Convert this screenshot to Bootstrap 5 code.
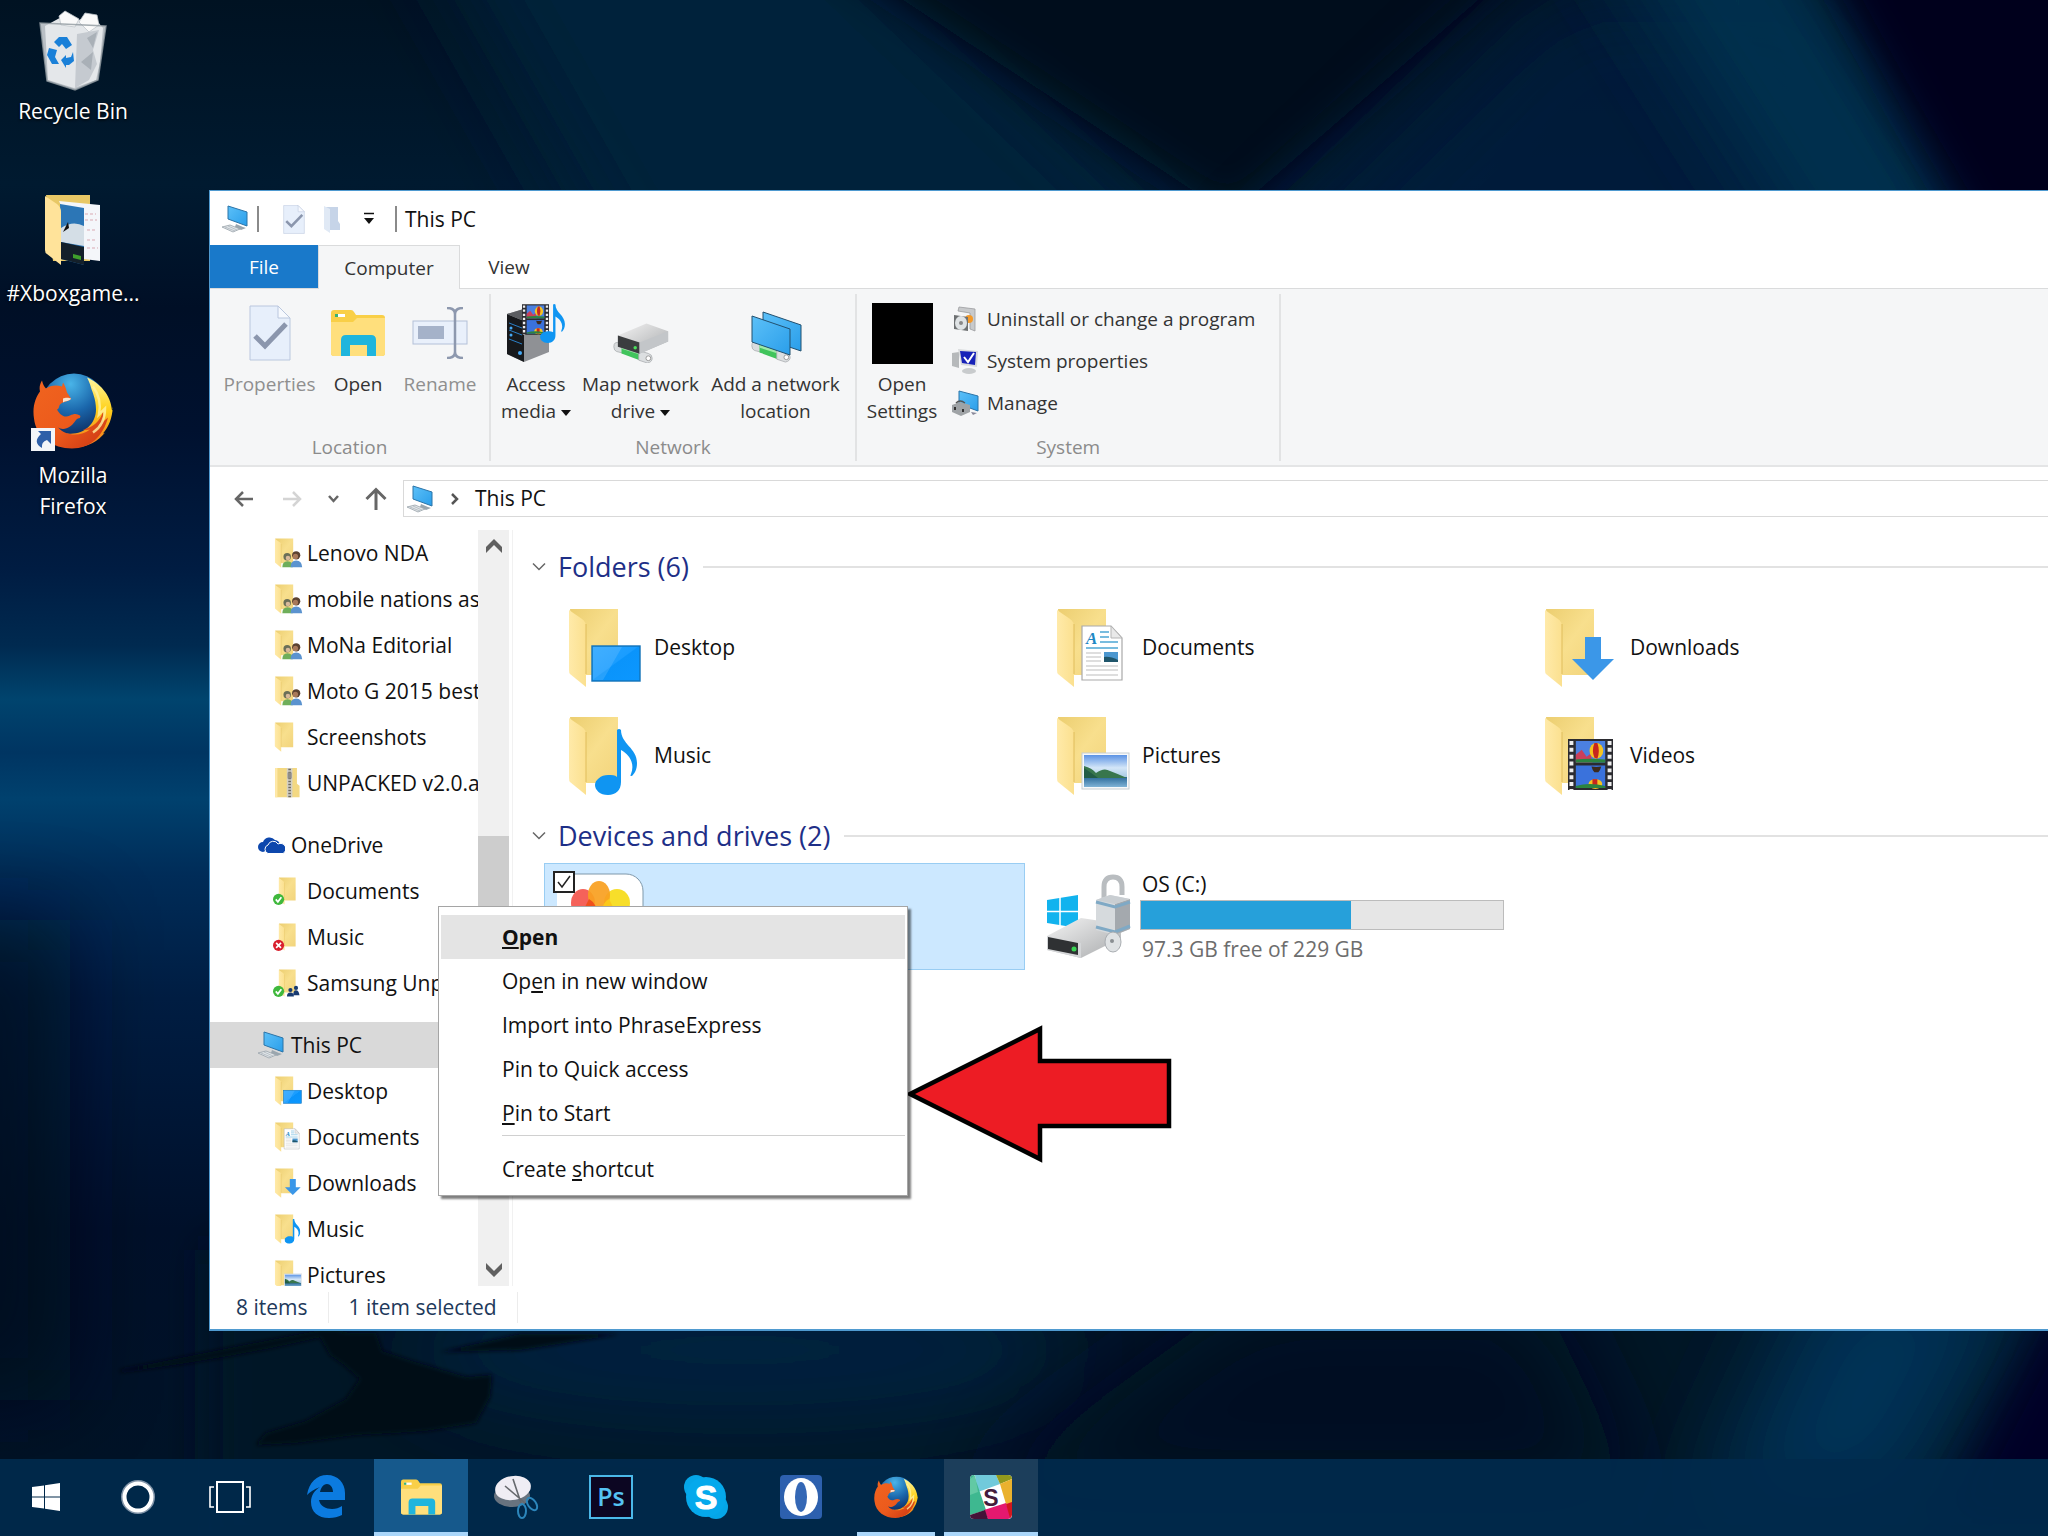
<!DOCTYPE html>
<html lang="en">
<head>
<meta charset="utf-8">
<meta name="viewport" content="width=device-width, initial-scale=1">
<title>This PC</title>
<link href="https://cdn.jsdelivr.net/npm/bootstrap@5.3.0/dist/css/bootstrap.min.css" rel="stylesheet">
<style>
:root{--ui:"Open Sans","Noto Sans",sans-serif;}
html,body{height:100%;}
body{font-family:var(--ui);font-size:21px;line-height:31px;color:#111;background:#00122a;overflow:hidden;}
svg{display:block;flex:none;}
a{color:inherit;text-decoration:none;}
.wallpaper{position:absolute;inset:0;width:100%;height:100%;z-index:-1;}
.fill{min-height:0;flex:1 1 0;}
/* desktop shortcuts */
.shortcuts{width:209px;}
.shortcut{width:146px;height:182px;padding-top:8px;color:#fff;text-align:center;text-shadow:0 1px 3px #000;}
.shortcut svg{margin:0 auto 4px;}
/* explorer window */
.explorer{margin:190px 0 128px;background:#fff;border:solid #4f9ad0;border-width:1px 0 2px 1px;min-width:0;}
.titlebar{height:54px;padding:2px 0 0 11px;flex:none;}
.rule{width:2px;height:26px;background:#8a8a8a;}
.tabs{height:44px;border-bottom:1px solid #dadbdc;flex:none;}
.tabs .btn{border-radius:0;border:0;font-size:19px;line-height:28px;padding:0;height:43px;color:#333;}
.tabs .tab-file{width:108px;background:#1979ca;color:#fff;}
.tabs .tab-on{width:142px;height:44px;background:#f5f6f7;border:1px solid #dadbdc;border-bottom:0;}
.tabs .tab-view{width:98px;}
.ribbon{height:178px;background:#f5f6f7;border-bottom:2px solid #e4e5e6;font-size:19px;line-height:27px;padding:5px 0 4px;flex:none;}
.ribbon-group{border-right:2px solid #e2e3e4;}
.ribbon .btn{font-size:19px;line-height:27px;padding:0;border:0;border-radius:0;color:#333;}
.ribbon .btn:disabled{color:#8f8f8f;opacity:1;}
.tool{display:flex;flex-direction:column;align-items:center;}
.tool .pic{height:62px;margin:8px 0 7px;display:flex;align-items:center;}
.stacked{gap:15px;}
.group-name{color:#8b8b8b;margin-top:auto;text-align:center;}
.wd-a{width:95px}.wd-b{width:82px}.wd-c{width:127px}.wd-d{width:143px}.wd-e{width:74px}
.caret{display:inline-block;border:5px solid transparent;border-top:6px solid #111;border-bottom:0;vertical-align:middle;margin-left:5px;}
.addressbar{height:63px;padding:13px 0 13px 24px;flex:none;}
.addressbar .btn{border:0;padding:0;}
.address{height:37px;border:1px solid #d9d9d9;border-right:0;}
/* navigation tree */
.tree{width:268px;overflow:hidden;flex:none;}
.tree a{display:flex;align-items:center;height:46px;white-space:nowrap;}
.tree .lv1{padding-left:47px;gap:6px;margin-top:16px;}
.tree .lv2{padding-left:63px;gap:3px;}
.tree .lv2 svg{width:31px;height:30px;}
.tree .chosen{background:#d9d9d9;}
.scroller{width:31px;background:#f0f0f0;}
.thumb{height:310px;background:#cdcdcd;margin-top:282px;}
.filepane{border-left:1px solid #f1f1f1;margin-left:3px;padding:10px 0 0 18px;min-width:0;}
.section-head{height:54px;color:#1e2f87;gap:11px;}
.section-head hr{margin:0 0 0 3px;border:0;height:2px;background:#e2e2e2;opacity:1;}
.section-head h2{font-size:27px;font-weight:400;margin:0;line-height:36px;}
.tiles{gap:1px 7px;padding-left:13px;}
.tile{width:481px;height:107px;padding-left:12px;gap:10px;border:1px solid transparent;}
.tile .art{width:87px;}
.tile-on{background:#cce8ff;border-color:#99cdf3;position:relative;}
.tile-on .form-check-input{position:absolute;left:8px;top:7px;width:22px;height:22px;margin:0;border:2px solid #222;border-radius:0;background-color:#fff;background-image:none;}
.tile-on .tickmark{position:absolute;left:11px;top:10px;}
.space-bar{width:364px;height:30px;border-radius:0;background:#e6e6e6;border:1px solid #bcbcbc;margin-left:-2px;}
.space-bar .progress-bar{background:#26a0da;}
.free-note{color:#6d6d6d;}
.statusbar{height:43px;color:#1e395b;padding-left:26px;flex:none;}
.statusbar span{border-right:1px solid #ececec;padding-right:20px;margin-right:20px;}
/* context menu */
.ctx{position:absolute;left:438px;top:906px;width:470px;border:1px solid #a5a5a5;border-radius:0;padding:8px 2px 4px;background:#fff;box-shadow:3px 3px 2px rgba(0,0,0,.5);font-size:21px;--bs-dropdown-divider-margin-y:0;display:block;min-width:0;color:#111;}
.ctx .dropdown-item{height:44px;padding:0 0 0 61px;line-height:44px;color:#111;}
.ctx .first{background:#e4e4e4;font-weight:700;}
.ctx hr{margin:0 0 11px 61px;border-color:#d0d0d0;}
.pointer{position:absolute;left:906px;top:1024px;}
/* taskbar */
.taskbar{height:77px;background:rgba(0,42,76,.93);}
.taskbar .btn{border:0;border-radius:0;padding:0;height:77px;display:flex;align-items:center;justify-content:center;border-bottom:4px solid transparent;padding-top:2px;}
.sys .btn{width:92px;}
.apps{gap:1px;padding-left:3px;}
.apps .btn{width:94px;}
.apps .running{border-bottom-color:#a9d6fa;}
.apps .active-app{background:#16598c;}
.apps .hover-app{background:#1c3e5b;}
.apps .narrow{width:78px;margin:0 8px;}
</style>
<script src="https://cdn.jsdelivr.net/npm/bootstrap@5.3.0/dist/js/bootstrap.bundle.min.js"></script>
</head>
<body class="d-flex flex-column">

<svg width="0" height="0" class="position-absolute" aria-hidden="true">
<defs>
<linearGradient id="gBack" x1="0" y1="0" x2="1" y2="1"><stop offset="0" stop-color="#ecce70"/><stop offset=".5" stop-color="#f8df8d"/><stop offset="1" stop-color="#f2d47c"/></linearGradient>
<linearGradient id="gFlap" x1="0" y1="0" x2="1" y2="0"><stop offset="0" stop-color="#ffeaa9"/><stop offset="1" stop-color="#fbe08f"/></linearGradient>
<linearGradient id="gBlue" x1="0" y1="0" x2="1" y2="1"><stop offset="0" stop-color="#27a4ff"/><stop offset=".48" stop-color="#1a9dff"/><stop offset=".5" stop-color="#0a94fb"/><stop offset="1" stop-color="#0c97ff"/></linearGradient>
<linearGradient id="gScreen" x1="0" y1="0" x2="1" y2="1"><stop offset="0" stop-color="#5cc0f8"/><stop offset="1" stop-color="#2a9eea"/></linearGradient>
<linearGradient id="gGrey" x1="0" y1="0" x2="1" y2="1"><stop offset="0" stop-color="#f4f4f4"/><stop offset="1" stop-color="#a9abad"/></linearGradient>
<linearGradient id="gSky" x1="0" y1="0" x2="0" y2="1"><stop offset="0" stop-color="#5b93e4"/><stop offset=".4" stop-color="#d4e6f8"/><stop offset=".68" stop-color="#a9cbe3"/><stop offset=".7" stop-color="#2f6d9c"/><stop offset="1" stop-color="#7fb3d6"/></linearGradient>
<linearGradient id="gFox" x1="0" y1="0" x2="1" y2="1"><stop offset="0" stop-color="#f0641f"/><stop offset=".55" stop-color="#ec5a1c"/><stop offset="1" stop-color="#c93412"/></linearGradient>
<linearGradient id="gTail" x1="0" y1="0" x2="0" y2="1"><stop offset="0" stop-color="#fff6a0"/><stop offset=".45" stop-color="#ffd21c"/><stop offset="1" stop-color="#f1701c"/></linearGradient>
<radialGradient id="gGlobe" cx=".45" cy=".15" r=".8"><stop offset="0" stop-color="#49b4e8"/><stop offset=".5" stop-color="#1a66ab"/><stop offset="1" stop-color="#0b2457"/></radialGradient>

<symbol id="folder" viewBox="0 0 73 80"><path d="M1 1h48v66H8z" fill="url(#gBack)"/><path d="M0 2l13 9q4 3 4 7v61L1 66q-1-1-1-4z" fill="url(#gFlap)"/><path d="M17 16v50" stroke="#e0bd5c" stroke-width="1"/></symbol>
<symbol id="f-desktop" viewBox="0 0 73 80"><use href="#folder" width="73" height="80"/><rect x="23" y="38" width="48" height="35" fill="url(#gBlue)" stroke="#1272b8" stroke-width="1.4"/><path d="M24 39h29L34 72H24z" fill="#fff" opacity=".12"/></symbol>
<symbol id="f-docs" viewBox="0 0 73 80"><use href="#folder" width="73" height="80"/><path d="M25 18h29l11 12v42H25z" fill="#fff" stroke="#a9a9a9" stroke-width="1.2"/><path d="M54 18v12h11z" fill="#e9e9e9" stroke="#b5b5b5"/><text x="29" y="36" font-family="Liberation Serif,serif" font-style="italic" font-weight="700" font-size="17" fill="#1e88c4">A</text><path d="M43 24h9M43 29h9M43 34h18M29 40h32" stroke="#4da6d4" stroke-width="1.4"/><path d="M29 45h15M29 49h15M29 53h15M29 58h32M29 62h32M29 67h32" stroke="#bdbdbd"/><path d="M47 44h14v10H47z" fill="#4c97cf"/><path d="M47 49q6-1 14 3v2H47z" fill="#20566b"/></symbol>
<symbol id="f-down" viewBox="0 0 73 80"><use href="#folder" width="73" height="80"/><path d="M40 29h16v22h13L48 72 27 51h13z" fill="#3b97e8"/></symbol>
<symbol id="note" viewBox="0 0 42 66"><path d="M22 1q2-2 4 0c0 14 16 18 16 33 0 6-2 10-5 13-1 0-2 0-1-2 4-10-1-19-10-24v32c0 8-5 13-13 13S0 61 0 56s6-10 13-10c4 0 7 0 9 2z" fill="#0f95f2"/></symbol>
<symbol id="f-music" viewBox="0 0 73 80"><use href="#folder" width="73" height="80"/><use href="#note" x="26" y="13" width="42" height="66"/></symbol>
<symbol id="f-pics" viewBox="0 0 73 80"><use href="#folder" width="73" height="80"/><rect x="25" y="37" width="47" height="36" fill="#f7f9fa" stroke="#c6cdd2"/><rect x="27" y="39" width="43" height="32" fill="url(#gSky)"/><path d="M27 50q8 2 12 7 8-6 14-2 8 3 17 7H27z" fill="#38764d"/><path d="M27 52q6 4 14 10H27z" fill="#235c45"/></symbol>
<symbol id="film" viewBox="0 0 46 52"><path d="M0 0h46v52H0z" fill="#2b2b30"/><path d="M3.500 2v50M42.500 2v50" stroke="#eee" stroke-width="4" stroke-dasharray="4 3"/><path d="M8 2h30v22H8z" fill="#4b80e0"/><path d="M8 27h30v23H8z" fill="#3a72dc"/><path d="M8 16l6-5 5 7 4-3 2 9H8z" fill="#cb3f5a"/><path d="M8 21q14-2 30 0v3H8z" fill="#2c8440"/><ellipse cx="29" cy="12" rx="7" ry="8" fill="#f5c321"/><path d="M27 4q-3 8 0 15l3 1q3-8 0-16z" fill="#c7261e"/><path d="M24 28q5 1 10 0-1 4-3 6h-4q-2-2-3-6z" fill="#3c2a1d"/><ellipse cx="28" cy="46" rx="7" ry="5" fill="#f5c321"/><path d="M25 41h5v9h-5z" fill="#c7261e"/><path d="M8 48q14-4 30 0v2H8z" fill="#2c8440"/></symbol>
<symbol id="f-video" viewBox="0 0 73 80"><use href="#folder" width="73" height="80"/><use href="#film" x="23" y="23" width="45" height="51"/></symbol>
<symbol id="f-people" viewBox="0 0 73 80"><use href="#folder" width="73" height="80"/><path d="M20 78q0-16 14-16t14 16z" fill="#6fae5a"/><circle cx="33" cy="50" r="10" fill="#6b6f58"/><circle cx="35" cy="53" r="6" fill="#d9b99a"/><path d="M42 78q0-18 15-18t16 18z" fill="#5b93cf"/><circle cx="57" cy="46" r="11" fill="#5a4130"/><circle cx="55" cy="49" r="7" fill="#a8795a"/></symbol>
<symbol id="f-zip" viewBox="0 0 73 80"><path d="M1 0h58v42l7 5v31H1z" fill="#f3d882"/><path d="M1 0h6v78H1z" fill="#ffe9a8"/><path d="M32 0h15v78H32z" fill="#d4d0c4"/><path d="M39.500 2v76" stroke="#6e6a5f" stroke-width="7" stroke-dasharray="4 4"/><path d="M34 12h11v16H34z" fill="#8f8d88"/></symbol>
<symbol id="f-ok" viewBox="-16 0 89 80"><use href="#folder" width="73" height="80"/><circle cx="0" cy="64" r="16" fill="#3fb83c"/><path d="M-8 64l6 7 10-13" fill="none" stroke="#fff" stroke-width="5"/></symbol>
<symbol id="f-bad" viewBox="-16 0 89 80"><use href="#folder" width="73" height="80"/><circle cx="0" cy="64" r="16" fill="#d9202e"/><path d="M-7 57L7 71M7 57L-7 71" stroke="#fff" stroke-width="5"/></symbol>
<symbol id="f-okshare" viewBox="-16 0 89 80"><use href="#folder" width="73" height="80"/><circle cx="0" cy="64" r="16" fill="#3fb83c"/><path d="M-8 64l6 7 10-13" fill="none" stroke="#fff" stroke-width="5"/><g fill="#173a70"><circle cx="34" cy="60" r="6"/><path d="M24 79q0-12 10-12t10 12z"/><circle cx="50" cy="54" r="6"/><path d="M42 75q0-14 8-14t10 14z"/></g></symbol>
<symbol id="pc" viewBox="0 0 28 28"><path d="M7 1l19 6v14L7 14z" fill="url(#gScreen)" stroke="#2b74a8" stroke-width="1"/><path d="M15 19l7 3 3 1-5 2-6-3z" fill="#9aa6ae"/><path d="M1 22l8-2 10 4-7 3z" fill="#e3e7ea" stroke="#98a2a9" stroke-width=".8"/><path d="M4 22l10 4M7 21l9 4" stroke="#a5afb6" stroke-width=".7"/></symbol>
<symbol id="checkdoc" viewBox="0 0 42 56"><path d="M1 1h28l12 12v42H1z" fill="#e7effb" stroke="#bac7de"/><path d="M29 1v12h12z" fill="#f6f9fe" stroke="#bac7de"/><path d="M6 31l10 10 21-22" fill="none" stroke="#8b96ad" stroke-width="5"/></symbol>
<symbol id="explorerico" viewBox="0 0 54 46"><path d="M0 3q0-3 3-3h17q2 0 3 2l2 3h26q3 0 3 3v35q0 3-3 3H3q-3 0-3-3z" fill="#f9cf47"/><path d="M0 12h22l4-4h28v35q0 3-3 3H3q-3 0-3-3z" fill="#ffdf7c"/><path d="M4 4h10v3H4z" fill="#fff"/><path d="M4 4h3v3H4z" fill="#3bb273"/><path d="M10 46V30q0-5 5-5h25q5 0 5 5v16h-9V35H19v11z" fill="#1fb5dd"/></symbol>
<symbol id="firefox" viewBox="0 0 80 76"><ellipse cx="41" cy="36" rx="34" ry="35" fill="url(#gGlobe)"/><path d="M54 5C66 10 78 22 79 38c2-2 1-4 1-4-1 12-4 20-10 27 1 0 2-1 3-2-8 10-18 16-33 16l-6-14c16 2 29-9 29-24 0-11-4-18-5-22-1-4-3-8-4-10z" fill="url(#gTail)"/><path d="M9 8c1 4 2 6 4 8 4-3 10-4 16-2l1-4c2 3 3 6 4 10l4 6c-1 3-7 2-11 6-1 1-1 5-3 5 3 5 7 9 13 6 4-2 7-2 10 0 1 1 0 3-2 3-3 1-4 6-8 8-4 3-9 3-12 1 7 8 22 10 32 2-4 1-7 0-7 0 10-2 17-8 20-18 1 4 0 8-1 11l6-5c-5 19-18 31-36 31C20 76 3 65 1 46-1 34 3 24 7 19c-1-4 0-8 2-11z" fill="url(#gFox)"/><path d="M30 26c2-1 6-1 8 0-1 3-6 2-8 4z" fill="#f7e3cf"/><path d="M60 14c6 8 8 18 6 28l6-6c0 12-6 20-12 24" fill="none" stroke="#fff2a2" stroke-width="2.500" opacity=".8"/></symbol>
<symbol id="drive" viewBox="0 0 60 36"><path d="M1 14L34 0l25 9v12L26 35 1 27z" fill="url(#gGrey)"/><path d="M1 14l25 8v13L1 27z" fill="#3b3d3f"/><path d="M26 22l33-13v12L26 35z" fill="#c3c6c9"/><circle cx="21" cy="28" r="2" fill="#4be05c"/></symbol>
<symbol id="cable" viewBox="0 0 42 24"><path d="M1 6q0-6 6-4l5 2v9L4 11q-3-1-3-5z" fill="#d9dcde" stroke="#a7abae" stroke-width=".8"/><path d="M9 3l19 6v11L9 13z" fill="#41c45c"/><path d="M9 5l19 6v3L9 8z" fill="#9eeaa8"/><path d="M27 10l10 3q4 1 4 5t-5 5l-9-3z" fill="#dcdfe1" stroke="#a7abae" stroke-width=".8"/><circle cx="37" cy="18" r="2.500" fill="#fff" stroke="#999"/></symbol>
</defs>
</svg>

<svg class="wallpaper" viewBox="0 0 2048 1536" preserveAspectRatio="none" aria-hidden="true">
<defs>
<filter id="b20" filterUnits="userSpaceOnUse" x="-400" y="-400" width="2900" height="2400"><feGaussianBlur stdDeviation="20"/></filter>
<filter id="b40" filterUnits="userSpaceOnUse" x="-400" y="-400" width="2900" height="2400"><feGaussianBlur stdDeviation="45"/></filter>
<filter id="b1" filterUnits="userSpaceOnUse" x="0" y="1280" width="700" height="220"><feGaussianBlur stdDeviation="2"/></filter>
<linearGradient id="wBase" x1="0" y1="0" x2="0" y2="1"><stop offset="0" stop-color="#001222"/><stop offset=".12" stop-color="#001a30"/><stop offset=".2" stop-color="#000f26"/><stop offset=".28" stop-color="#00112f"/><stop offset=".37" stop-color="#001c42"/><stop offset=".42" stop-color="#002a50"/><stop offset=".455" stop-color="#00446e"/><stop offset=".49" stop-color="#003562"/><stop offset=".52" stop-color="#00416e"/><stop offset=".57" stop-color="#002c58"/><stop offset=".65" stop-color="#001d42"/><stop offset=".8" stop-color="#00102a"/><stop offset="1" stop-color="#001426"/></linearGradient>
</defs>
<rect width="2048" height="1536" fill="url(#wBase)"/>
<rect x="-120" y="920" width="190" height="480" fill="#000c1c" opacity=".7" filter="url(#b40)"/>
<path d="M380-160H760L1240 300H640z" fill="#00223a" filter="url(#b40)"/>
<path d="M690-140H1640L1230 215z" fill="#000a1a" filter="url(#b20)"/>
<path d="M1230 300L1560-20H1820L2060 300z" fill="#001b3e" opacity=".8" filter="url(#b40)"/>
<path d="M1560-140H1740L2010 300H1840z" fill="#00304f" filter="url(#b40)"/>
<path d="M1740-200H2300V380H2060Q1900 120 1740-200z" fill="#00001f" filter="url(#b20)"/>
<rect x="209" y="1250" width="1900" height="300" fill="#001428" filter="url(#b20)"/>
<ellipse cx="740" cy="1350" rx="330" ry="70" fill="#002440" filter="url(#b40)"/>
<path d="M960 1500L1250 1290H1540L1640 1500z" fill="#000920" filter="url(#b40)"/>
<path d="M1700 1520L1820 1260H2040L1900 1520z" fill="#003156" filter="url(#b40)"/>
<path d="M2200 1290L2050 1310 1940 1520H2200z" fill="#000025" filter="url(#b20)"/>
<g fill="#000a18" filter="url(#b1)"><path d="M318 1333h58l6 18 30 10 54 16 26-2-2 22-14 26-50 8-30 2-40 2-60 8-40 2 10-12 40-12 40-22 14-20-16-14-14-10z"/><path d="M120 1370l200-40h30q-120 30-230 42zM440 1352l80-18h100q-60 10-100 16z"/></g>
</svg>

<main class="d-flex fill">
  <nav class="shortcuts flex-shrink-0" aria-label="Desktop">
    <a href="#" class="shortcut d-block">
      <svg width="72" height="84" viewBox="0 0 72 84"><path d="M3 15l66 3-8 54-23 10-28-9z" fill="#b9bfc5"/><path d="M8 18L30 6l12 6 12-6 12 14-3 34-4 18-22 8-26-8z" fill="#e4e7ea"/><path d="M22 8l6-5 14 8-4 8-14-2zM42 14l6-9 12 2 2 10-10 7z" fill="#fafafa" stroke="#bfc5ca" stroke-width=".8"/><path d="M40 26l22-4-6 20 4 14-8 16-14 8z" fill="#c5cad0"/><path d="M50 30l10-6-4 16zM44 54l12-10-2 18z" fill="#a9b0b7"/><path d="M3 15l66 3-8 54-23 10-28-9z" fill="none" stroke="#8f989f" stroke-width="1.500" opacity=".8"/><g fill="#1a80d8"><path d="M17 34l5-5h8l5 8-6 4-4-5-3 3z"/><path d="M12 40l8 2-2 7 4 7h-7l-5-9z"/><path d="M24 52l5-5v3l5-1 2-5 1 9-5 4-3 0v3z"/></g></svg>
      Recycle Bin</a>
    <a href="#" class="shortcut d-block">
      <svg width="56" height="84" viewBox="0 -3 56 84"><path d="M1 2h44v66H8z" fill="#e8c866"/><path d="M14 8l41 4v56l-16-2z" fill="#f4f6fa"/><path d="M40 21h11M40 27h12M42 37h10M42 47h10M42 55h11" stroke="#d9a9b2" stroke-dasharray="3 2"/><path d="M15 11l24 4v57l-23-6z" fill="#2c76b6"/><path d="M16 35q12-8 23-2v20l-23-4z" fill="#d4dee6"/><path d="M16 49l23 5v18l-23-6z" fill="#14202a"/><path d="M18 39l5-10 1 6z" fill="#111"/><path d="M28 61l8 2v4l-8-2z" fill="#3fa02c"/><path d="M0 3l12 8q4 3 4 8v53L2 61q-2-1-2-4z" fill="#ffe39a"/></svg>
      #Xboxgame...</a>
    <a href="#" class="shortcut d-block">
      <svg width="84" height="84" viewBox="0 0 84 84"><use href="#firefox" x="2" y="0" width="80" height="77"/><rect x="0" y="56" width="24" height="23" fill="#f3f5f8"/><path d="M7 59h13v13l-4-4q-6 2-5 8-10-6-1-14z" fill="#2e5fa8"/></svg>
      Mozilla<br>Firefox</a>
  </nav>

  <section class="explorer d-flex flex-column flex-grow-1">
    <header class="titlebar d-flex align-items-center">
      <svg width="28" height="28"><use href="#pc"/></svg>
      <span class="rule ms-2"></span>
      <svg class="ms-4" width="22" height="29"><use href="#checkdoc"/></svg>
      <svg class="ms-3" width="22" height="29" viewBox="0 0 22 29"><path d="M4 2h13v14l2 3v6H6z" fill="#c6d4e8"/><path d="M3 1l6 3v24l-6-4z" fill="#e0e9f5"/></svg>
      <svg class="ms-3" width="20" height="14" viewBox="0 0 20 14"><path d="M5 1.500h10" stroke="#111" stroke-width="1.500"/><path d="M5 6h10l-5 6z" fill="#111"/></svg>
      <span class="rule ms-3"></span>
      <span class="ms-2">This PC</span>
    </header>
    <div class="tabs d-flex">
      <button class="btn tab-file">File</button><button class="btn tab-on">Computer</button><button class="btn tab-view">View</button>
    </div>

    <div class="ribbon d-flex">
      <div class="ribbon-group d-flex flex-column">
        <div class="d-flex align-items-start ps-2 pe-2 ms-1">
          <button class="btn tool wd-a" disabled><span class="pic"><svg width="42" height="56"><use href="#checkdoc"/></svg></span>Properties</button>
          <button class="btn tool wd-b"><span class="pic"><svg width="54" height="46"><use href="#explorerico"/></svg></span>Open</button>
          <button class="btn tool wd-b" disabled><span class="pic"><svg width="56" height="52" viewBox="0 0 56 52"><rect x="1" y="14" width="54" height="23" fill="#e9f0fb" stroke="#b3c0d8"/><rect x="6" y="19" width="26" height="13" fill="#a5b2c9"/><path d="M35 1q8 0 8 6v38q0 6-8 6M51 1q-8 0-8 6v38q0 6 8 6" fill="none" stroke="#8d98ae" stroke-width="2.500"/></svg></span>Rename</button>
        </div>
        <div class="group-name">Location</div>
      </div>
      <div class="ribbon-group d-flex flex-column">
        <div class="d-flex align-items-start ps-1 pe-2">
          <button class="btn tool wd-b"><span class="pic"><svg width="60" height="60" viewBox="0 0 60 60"><path d="M1 11l20-6 22 8v36L18 59 1 51z" fill="#8f9195"/><path d="M1 11l17 7v41L1 51z" fill="#17191c"/><path d="M1 11l20-6 22 8-25 5z" fill="#5b5d61"/><path d="M3 20l13 5M3 27l13 5M3 36l13 5" stroke="#2b7fc6" stroke-width="1"/><circle cx="5" cy="25" r="1.500" fill="#45a9f5"/><circle cx="5" cy="32" r="1.500" fill="#45a9f5"/><circle cx="14" cy="50" r="2" fill="#45a9f5"/><use href="#film" x="16" y="1" width="27" height="31"/><use href="#note" x="34" y="1" width="25" height="39"/></svg></span><span>Access<br>media<i class="caret"></i></span></button>
          <button class="btn tool wd-c"><span class="pic"><svg width="60" height="60" viewBox="0 0 60 60"><use href="#cable" x="1" y="38" width="42" height="23"/><use href="#drive" x="6" y="20" width="52" height="32"/></svg></span><span>Map network<br>drive<i class="caret"></i></span></button>
          <button class="btn tool wd-d"><span class="pic"><svg width="54" height="60" viewBox="0 0 54 60"><use href="#cable" x="1" y="37" width="42" height="23"/><path d="M14 9l38 13v26L14 35z" fill="url(#gScreen)" stroke="#23506f"/><path d="M3 13l38 13v26L3 39z" fill="url(#gScreen)" stroke="#23506f"/></svg></span><span>Add a network<br>location</span></button>
        </div>
        <div class="group-name">Network</div>
      </div>
      <div class="ribbon-group d-flex flex-column">
        <div class="d-flex align-items-start ps-2 pe-4">
          <button class="btn tool wd-e"><span class="pic"><svg width="61" height="61"><rect width="61" height="61"/></svg></span><span>Open<br>Settings</span></button>
          <div class="stacked d-flex flex-column ps-2 ms-1 pt-2 mt-1">
            <button class="btn d-flex align-items-center gap-2"><svg width="28" height="27" viewBox="0 0 28 27"><path d="M8 1l16 2v22l-5-2V7L7 5z" fill="#c8cacc" stroke="#9a9c9e" stroke-width=".8"/><circle cx="18" cy="13" r="4" fill="#f39a2b"/><path d="M3 9l14 2v14L3 23z" fill="#6d7072"/><ellipse cx="10" cy="17" rx="6" ry="7" fill="#dfe3e5"/><circle cx="10" cy="17" r="2" fill="#888"/></svg>Uninstall or change a program</button>
            <button class="btn d-flex align-items-center gap-2"><svg width="28" height="27" viewBox="0 0 28 27"><path d="M1 5l7-1v16l-7-2z" fill="#b6b9bb"/><path d="M7 1l20 2-1 16-16-2z" fill="#d8dadc"/><path d="M9 3l16 1-1 13-13-2z" fill="#1722b8"/><path d="M13 9l4 5 6-9" fill="none" stroke="#fff" stroke-width="2"/><ellipse cx="18" cy="23" rx="7" ry="3" fill="#c8cbcd"/></svg>System properties</button>
            <button class="btn d-flex align-items-center gap-2"><svg width="28" height="27" viewBox="0 0 28 27"><path d="M8 1l19 5v15L8 14z" fill="url(#gScreen)" stroke="#2b74a8"/><path d="M1 15l8-3 10 3v7l-9 4-9-4z" fill="#9fa3a6"/><path d="M5 13q4-4 9 0" fill="none" stroke="#555" stroke-width="1.500"/><path d="M4 17v3M12 19v3" stroke="#333" stroke-width="2"/><path d="M20 22l6 1-4 2z" fill="#889"/></svg>Manage</button>
          </div>
        </div>
        <div class="group-name">System</div>
      </div>
    </div>

    <div class="addressbar d-flex align-items-center">
      <button class="btn" aria-label="Back"><svg width="20" height="18" viewBox="0 0 20 18"><path d="M19 9H2M9 2L2 9l7 7" fill="none" stroke="#666" stroke-width="2.500"/></svg></button>
      <button class="btn ms-4 ps-1" aria-label="Forward"><svg width="20" height="18" viewBox="0 0 20 18"><path d="M1 9h17M11 2l7 7-7 7" fill="none" stroke="#d4d4d4" stroke-width="2.500"/></svg></button>
      <button class="btn ms-4" aria-label="Recent"><svg width="15" height="10" viewBox="0 0 15 10"><path d="M3 2l4.500 5L12 2" fill="none" stroke="#666" stroke-width="2.500"/></svg></button>
      <button class="btn ms-4" aria-label="Up"><svg width="22" height="24" viewBox="0 0 22 24"><path d="M11 23V3M1.500 12L11 2.500l9.500 9.500" fill="none" stroke="#666" stroke-width="3"/></svg></button>
      <div class="address d-flex align-items-center flex-grow-1 ms-3 gap-3">
        <svg width="30" height="28" viewBox="-2 0 30 28"><use href="#pc" width="28" height="28"/></svg>
        <svg width="9" height="14" viewBox="0 0 9 14"><path d="M2 2l5 5-5 5" fill="none" stroke="#555" stroke-width="2.500"/></svg>
        <a href="#">This PC</a>
      </div>
    </div>

    <div class="d-flex fill">
      <nav class="tree" aria-label="Folders">
        <a class="lv2" href="#"><svg><use href="#f-people"/></svg>Lenovo NDA</a>
        <a class="lv2" href="#"><svg><use href="#f-people"/></svg>mobile nations as</a>
        <a class="lv2" href="#"><svg><use href="#f-people"/></svg>MoNa Editorial</a>
        <a class="lv2" href="#"><svg><use href="#f-people"/></svg>Moto G 2015 best</a>
        <a class="lv2" href="#"><svg><use href="#folder"/></svg>Screenshots</a>
        <a class="lv2" href="#"><svg><use href="#f-zip"/></svg>UNPACKED v2.0.a</a>
        <a class="lv1" href="#"><svg width="28" height="18" viewBox="0 0 28 18"><path d="M6 16a5 5 0 0 1 0-10A7 7 0 0 1 18 4a6 6 0 0 1 5 5z" fill="#0d47ad"/><path d="M11 17.500a4.500 4.500 0 0 1 0-8.500 5.500 5.500 0 0 1 10-1 5 5 0 0 1 5 9.500z" fill="#0d47ad" stroke="#fff" stroke-width="1"/></svg>OneDrive</a>
        <a class="lv2" href="#"><svg><use href="#f-ok"/></svg>Documents</a>
        <a class="lv2" href="#"><svg><use href="#f-bad"/></svg>Music</a>
        <a class="lv2" href="#"><svg><use href="#f-okshare"/></svg>Samsung Unpacked</a>
        <a class="lv1 chosen" href="#"><svg width="28" height="28"><use href="#pc"/></svg>This PC</a>
        <a class="lv2" href="#"><svg><use href="#f-desktop"/></svg>Desktop</a>
        <a class="lv2" href="#"><svg><use href="#f-docs"/></svg>Documents</a>
        <a class="lv2" href="#"><svg><use href="#f-down"/></svg>Downloads</a>
        <a class="lv2" href="#"><svg><use href="#f-music"/></svg>Music</a>
        <a class="lv2" href="#"><svg><use href="#f-pics"/></svg>Pictures</a>
      </nav>
      <div class="scroller d-flex flex-column flex-shrink-0">
        <svg class="mx-auto mt-2" width="18" height="16" viewBox="0 0 18 16"><path d="M1 9l8-8 8 8v6L9 7l-8 8z" fill="#606060"/></svg>
        <div class="thumb flex-shrink-0"></div>
        <svg class="mx-auto mt-auto mb-2" width="18" height="16" viewBox="0 0 18 16"><path d="M1 1l8 8 8-8v6l-8 8-8-8z" fill="#606060"/></svg>
      </div>

      <div class="filepane flex-grow-1">
        <div class="section-head d-flex align-items-center">
          <svg width="16" height="10" viewBox="0 0 16 10"><path d="M2 1.500l6 6 6-6" fill="none" stroke="#666" stroke-width="1.500"/></svg>
          <h2>Folders (6)</h2><hr class="flex-grow-1">
        </div>
        <div class="tiles d-flex flex-wrap">
          <a class="tile d-flex align-items-center" href="#"><span class="art ps-2"><svg class="ms-1" width="73" height="80"><use href="#f-desktop"/></svg></span>Desktop</a>
          <a class="tile d-flex align-items-center" href="#"><span class="art ps-2"><svg class="ms-1" width="73" height="80"><use href="#f-docs"/></svg></span>Documents</a>
          <a class="tile d-flex align-items-center" href="#"><span class="art ps-2"><svg class="ms-1" width="73" height="80"><use href="#f-down"/></svg></span>Downloads</a>
          <a class="tile d-flex align-items-center" href="#"><span class="art ps-2"><svg class="ms-1" width="73" height="80"><use href="#f-music"/></svg></span>Music</a>
          <a class="tile d-flex align-items-center" href="#"><span class="art ps-2"><svg class="ms-1" width="73" height="80"><use href="#f-pics"/></svg></span>Pictures</a>
          <a class="tile d-flex align-items-center" href="#"><span class="art ps-2"><svg class="ms-1" width="73" height="80"><use href="#f-video"/></svg></span>Videos</a>
        </div>
        <div class="section-head d-flex align-items-center">
          <svg width="16" height="10" viewBox="0 0 16 10"><path d="M2 1.500l6 6 6-6" fill="none" stroke="#666" stroke-width="1.500"/></svg>
          <h2>Devices and drives (2)</h2><hr class="flex-grow-1">
        </div>
        <div class="tiles d-flex flex-wrap">
          <div class="tile tile-on d-flex align-items-center">
            <svg width="88" height="88" viewBox="0 0 88 88"><rect x="-2" y="1" width="88" height="86" rx="17" fill="#fff" stroke="#7f98aa"/><ellipse cx="26" cy="30" rx="12" ry="14" fill="#f5625a"/><ellipse cx="60" cy="30" rx="13" ry="14" fill="#f7de2a"/><ellipse cx="42" cy="22" rx="11" ry="14" fill="#f9a01f" opacity=".92"/><path d="M32 26q8 4 10 20-10-4-14-12z" fill="#f0501c"/><path d="M52 26q-8 4-8 20 8-4 12-12z" fill="#fbc81a"/></svg>
            <input class="form-check-input" type="checkbox" checked aria-label="Select device">
            <svg class="tickmark" width="16" height="16" viewBox="0 0 16 16"><path d="M2 8l4 5 8-11" fill="none" stroke="#222" stroke-width="1.500"/></svg>
          </div>
          <div class="tile d-flex align-items-center">
            <span class="art"><svg width="87" height="86" viewBox="0 0 87 86"><path d="M2 26l31-5v33L2 49z" fill="#12b3ee"/><path d="M15 22v32M2 37.500h31" stroke="#fff" stroke-width="1.500"/><path d="M2 62l34-18 40 6v14L36 84 2 76z" fill="url(#gGrey)"/><path d="M2 62l34 7v15L2 76z" fill="#d4d6d8"/><path d="M3 63l30 6v12L3 75z" fill="#2f3133"/><circle cx="29" cy="75" r="2.500" fill="#39d353"/><path d="M59 30V13q0-10 9-10t9 10v8" fill="none" stroke="#b9bdc0" stroke-width="5"/><path d="M51 26l14-5 20 4v30l-15 6-19-5z" fill="#d6dadd"/><path d="M70 30l15-5v30l-15 6z" fill="#a4a9ae"/><path d="M51 26l14-5 20 4-15 5z" fill="#c9ced2"/><path d="M51 28l19 5 15-5M51 53l19 5 15-6" fill="none" stroke="#7fa9c5" stroke-width="3"/><ellipse cx="68" cy="68" rx="8" ry="10" fill="#dfe2e4" stroke="#a9adb1"/><circle cx="67" cy="67" r="2" fill="#8a8e92"/></svg></span>
            <div>
              <div>OS (C:)</div>
              <div class="progress space-bar mb-1" role="progressbar" aria-label="Used space" aria-valuenow="58"><div class="progress-bar" style="width:58%"></div></div>
              <div class="free-note">97.3 GB free of 229 GB</div>
            </div>
          </div>
        </div>
      </div>
    </div>

    <footer class="statusbar d-flex align-items-center"><span>8 items</span><span>1 item selected</span></footer>
  </section>
</main>

<div class="ctx dropdown-menu show">
  <button class="dropdown-item first"><u>O</u>pen</button>
  <button class="dropdown-item">Op<u>e</u>n in new window</button>
  <button class="dropdown-item">Import into PhraseExpress</button>
  <button class="dropdown-item">Pin to Quick access</button>
  <button class="dropdown-item"><u>P</u>in to Start</button>
  <hr class="dropdown-divider">
  <button class="dropdown-item">Create <u>s</u>hortcut</button>
</div>
<svg class="pointer" width="268" height="140" viewBox="0 0 268 140"><path d="M4 70L134 5v32h129v65H134v33z" fill="#ed1c24" stroke="#000" stroke-width="4.500"/></svg>

<footer class="taskbar d-flex flex-shrink-0">
  <div class="sys d-flex">
    <button class="btn" aria-label="Start"><svg width="28" height="28" viewBox="0 0 28 28" fill="#fff"><path d="M0 4l12-1.500v11H0zM13 2.300L28 0v13.500H13zM0 14.500h12v11L0 24zM13 14.500h15V28l-15-2.200z"/></svg></button>
    <button class="btn" aria-label="Cortana"><svg width="36" height="36" viewBox="0 0 36 36"><circle cx="18" cy="18" r="14.500" fill="none" stroke="#8194a8" stroke-width="5"/><circle cx="18" cy="18" r="13.500" fill="none" stroke="#fff" stroke-width="4"/></svg></button>
    <button class="btn" aria-label="Task view"><svg width="42" height="32" viewBox="0 0 42 32" fill="none" stroke="#fff"><rect x="8" y="1" width="26" height="30" stroke-width="2"/><path d="M5 6H1v20h4M37 6h4v20h-4" stroke-width="1.600"/></svg></button>
  </div>
  <div class="apps d-flex">
    <button class="btn" aria-label="Edge"><svg width="40" height="43" viewBox="0 0 40 43"><path d="M1 20C3 7 11 0 21 0c11 0 18 8 18 18v7H13c1 6 7 9 13 9 4 0 7-1 10-3v9c-4 2-8 3-13 3C12 43 5 37 5 27c0-7 4-12 9-15-6 2-10 5-13 8zm13-3h13c0-5-3-8-6-8-4 0-6 4-7 8z" fill="#0b7be0"/></svg></button>
    <button class="btn running active-app" aria-label="File Explorer"><svg width="41" height="36"><use href="#explorerico"/></svg></button>
    <button class="btn" aria-label="Snipping Tool"><svg width="46" height="46" viewBox="0 0 46 46"><ellipse cx="19" cy="22" rx="18" ry="11" fill="#68737f"/><ellipse cx="20" cy="14" rx="18" ry="12" fill="#efedf4" transform="rotate(-10 20 14)"/><path d="M12 12l20 17M20 5l8 24" stroke="#66696d" stroke-width="1.600"/><ellipse cx="29" cy="37" rx="4" ry="7" fill="none" stroke="#2c86bb" stroke-width="2"/><ellipse cx="39" cy="30" rx="4" ry="7" fill="none" stroke="#2c86bb" stroke-width="2" transform="rotate(-35 39 30)"/></svg></button>
    <button class="btn" aria-label="Photoshop"><svg width="44" height="44" viewBox="0 0 44 44"><rect x="1" y="1" width="42" height="42" fill="#0c0622" stroke="#4bb8e8" stroke-width="2"/><text x="22" y="31" text-anchor="middle" font-family="Open Sans,sans-serif" font-size="25" font-weight="600" fill="#55c3f3">Ps</text></svg></button>
    <button class="btn" aria-label="Skype"><svg width="44" height="44" viewBox="0 0 44 44"><circle cx="12" cy="12" r="12" fill="#05a6e8"/><circle cx="32" cy="32" r="12" fill="#05a6e8"/><circle cx="22" cy="22" r="20" fill="#05a9ec"/><text x="22" y="34" text-anchor="middle" font-family="Liberation Sans,sans-serif" font-size="34" font-weight="700" fill="#fff" stroke="#fff">S</text></svg></button>
    <button class="btn" aria-label="Opera"><svg width="44" height="44" viewBox="0 0 44 44"><rect x="1" width="42" height="44" rx="4" fill="#2d60ae"/><ellipse cx="22" cy="22" rx="17" ry="19" fill="#fff"/><ellipse cx="22" cy="22" rx="6" ry="15" fill="#3467b5"/></svg></button>
    <button class="btn running narrow" aria-label="Firefox"><svg width="44" height="44"><use href="#firefox"/></svg></button>
    <button class="btn running hover-app" aria-label="Slack"><svg width="42" height="44" viewBox="0 0 42 44"><rect width="42" height="44" rx="4" fill="#fff"/><path d="M5 0H26L30 9 8 17z" fill="#71cadb"/><path d="M26 0h12q4 0 4 4L30 9z" fill="#92991c"/><path d="M42 4v24L36 29 30 9z" fill="#eab12e"/><path d="M4 0L16 35 0 40V4q0-4 4-4z" fill="#3eb890"/><path d="M8 17L5 0 0 4v16z" fill="#62c9a4"/><path d="M14 35l22-7 5 14q-1 2-3 2H18z" fill="#e5186f"/><path d="M36 29l6-2v13q0 2-2 3z" fill="#d3171f"/><path d="M0 40l15-5 3 9H4q-4 0-4-4z" fill="#451238"/><text x="21" y="31" text-anchor="middle" font-family="Liberation Sans,sans-serif" font-size="23" font-weight="700" fill="#451c3c">S</text></svg></button>
  </div>
</footer>
</body>
</html>
